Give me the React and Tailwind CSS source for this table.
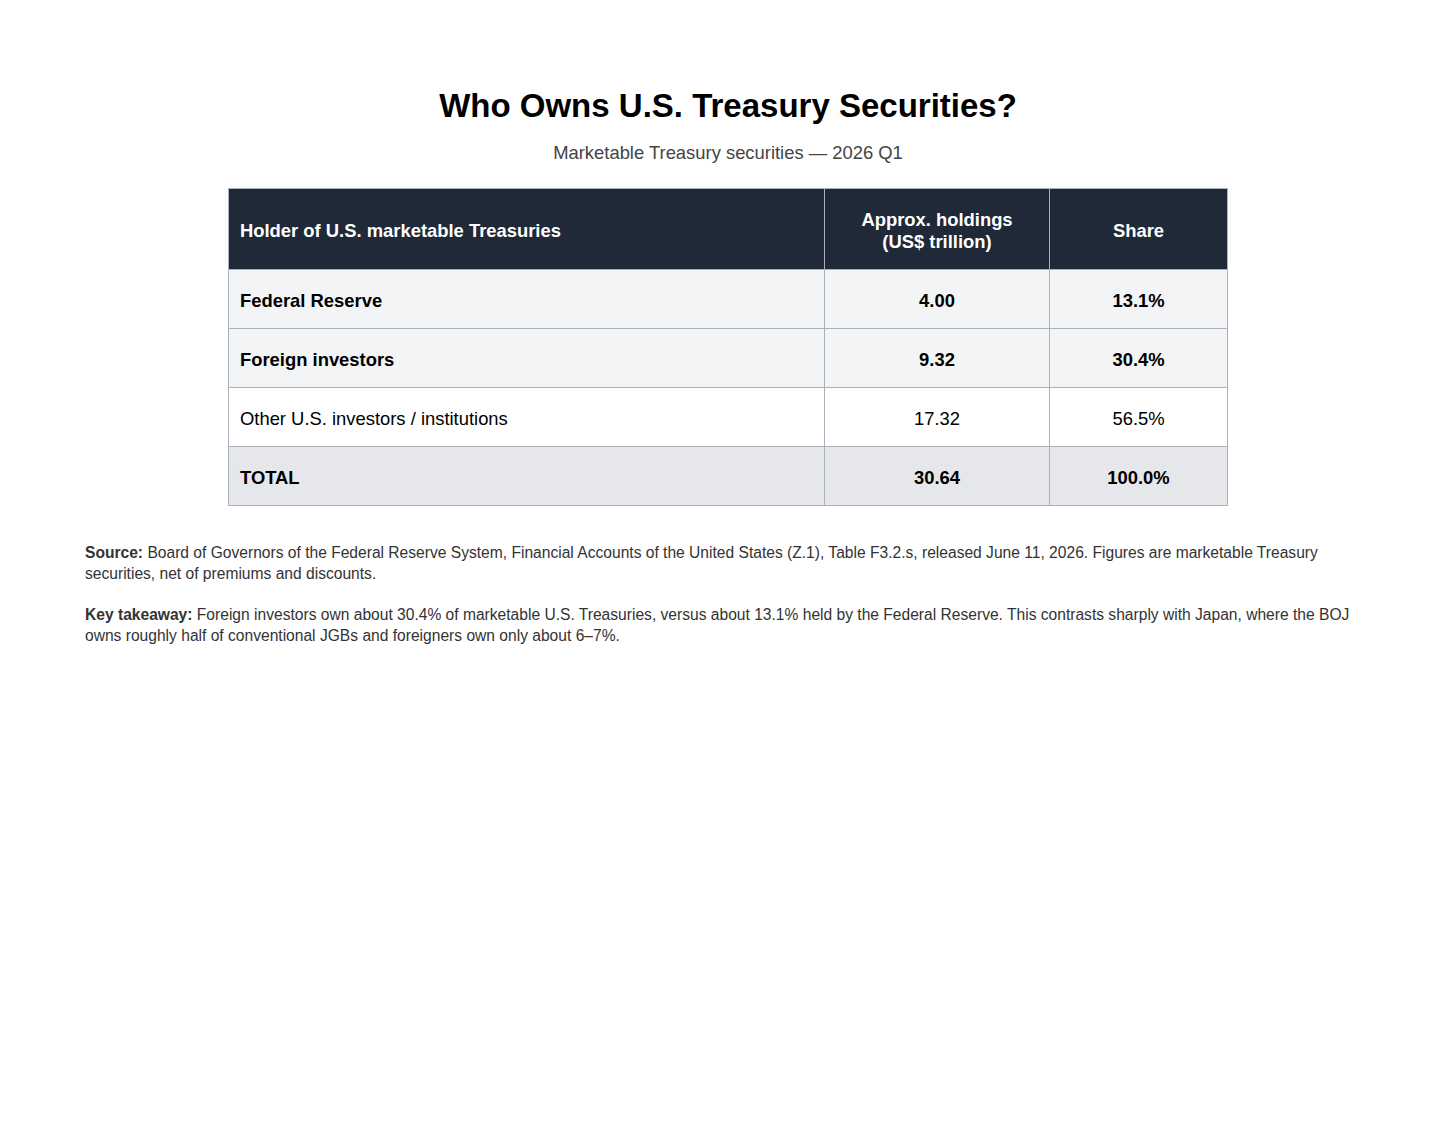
export default function App() {
  const rows = [
    { name: "Federal Reserve", v: "4.00", s: "13.1%", bold: true, bg: "bg-[#f3f4f6]" },
    { name: "Foreign investors", v: "9.32", s: "30.4%", bold: true, bg: "bg-[#f3f4f6]" },
    { name: "Other U.S. investors / institutions", v: "17.32", s: "56.5%", bold: false, bg: "bg-white" },
    { name: "TOTAL", v: "30.64", s: "100.0%", bold: true, bg: "bg-[#e5e7eb]" },
  ];
  return (
    <div className="min-h-[1125px] w-full bg-white px-[85px] pt-[84px] font-['Liberation_Sans',Arial,sans-serif] text-black">
      <h1 className="text-center text-[33px] font-bold leading-[44px]">Who Owns U.S. Treasury Securities?</h1>
      <p className="mt-[13px] text-center text-[18.4px] leading-[24px] text-[#444]">Marketable Treasury securities — 2026 Q1</p>
      <table className="mx-auto mt-[23px] w-[1000px] border-collapse text-[18.4px]">
        <thead>
          <tr className="h-[81px] bg-[#1f2937] text-white">
            <th className="w-[596px] border border-[#aab0ba] px-[11px] pt-[3px] text-left font-bold leading-[22px]">Holder of U.S. marketable Treasuries</th>
            <th className="w-[225px] border border-[#aab0ba] px-[11px] pt-[3px] text-center font-bold leading-[22px]">Approx. holdings<br />(US$ trillion)</th>
            <th className="border border-[#aab0ba] px-[11px] pt-[3px] text-center font-bold leading-[22px]">Share</th>
          </tr>
        </thead>
        <tbody>
          {rows.map((r) => (
            <tr key={r.name} className={`h-[59px] ${r.bg} ${r.bold ? "font-bold" : "font-normal"}`}>
              <td className="border border-[#aab0ba] px-[11px] pt-[3px] text-left">{r.name}</td>
              <td className="border border-[#aab0ba] px-[11px] pt-[3px] text-center">{r.v}</td>
              <td className="border border-[#aab0ba] px-[11px] pt-[3px] text-center">{r.s}</td>
            </tr>
          ))}
        </tbody>
      </table>
      <div className="mt-[36px] text-[15.6px] leading-[21px] text-[#333]">
        <p>
          <span className="font-bold">Source:</span> Board of Governors of the Federal Reserve System, Financial Accounts of the United States (Z.1), Table F3.2.s, released June 11, 2026. Figures are marketable Treasury securities, net of premiums and discounts.
        </p>
        <p className="mt-[20px]">
          <span className="font-bold">Key takeaway:</span> Foreign investors own about 30.4% of marketable U.S. Treasuries, versus about 13.1% held by the Federal Reserve. This contrasts sharply with Japan, where the BOJ owns roughly half of conventional JGBs and foreigners own only about 6–7%.
        </p>
      </div>
    </div>
  );
}
